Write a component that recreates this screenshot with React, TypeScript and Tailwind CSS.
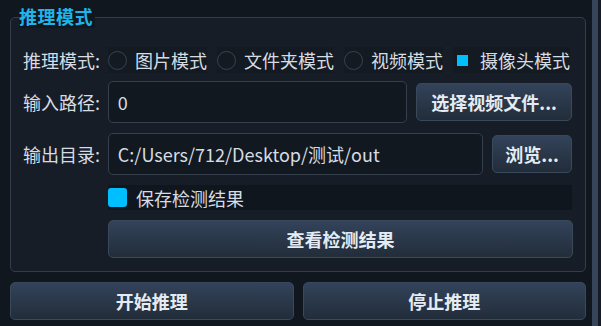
import React from 'react';

const FONT = { fontFamily: '"Microsoft YaHei", "Noto Sans CJK SC", "Noto Sans", sans-serif' };

const modes = [
  { label: '图片模式', checked: false },
  { label: '文件夹模式', checked: false },
  { label: '视频模式', checked: false },
  { label: '摄像头模式', checked: true },
];

function Btn({ children, className = '' }: { children: React.ReactNode; className?: string }) {
  return (
    <button
      className={`flex items-center justify-center rounded-[5px] border border-[#3a485b] bg-gradient-to-b from-[#33435a] to-[#222d3a] text-[18px] font-bold text-[#e4ebf3] ${className}`}
    >
      {children}
    </button>
  );
}

export default function App() {
  return (
    <div style={FONT} className="flex h-[326px] w-[601px] overflow-hidden bg-[#11171e] text-[18px] text-[#d6dce3]">
      <div className="flex w-[592px] flex-col pl-[10px] pr-[6px]">
        {/* group box */}
        <div className="relative mt-[17px] h-[255px] rounded-[5px] border border-[#343e4b] bg-[#161d26] pl-[12px] pr-[13px]">
          <span className="absolute left-[8px] top-[-14px] bg-[#11171e] pr-[2px] text-[18px] font-bold leading-[24px] tracking-[0.5px] text-[#1fb5ea]">
            推理模式
          </span>

          {/* mode row */}
          <div className="mt-[29px] flex h-[26px] items-center">
            <span className="w-[85px] leading-none">推理模式:</span>
            <div className="flex gap-[10px]">
              {modes.map(m => (
                <div key={m.label} className="flex h-[26px] items-center gap-[8px] bg-[#131a22]">
                  <span className="flex h-[19px] w-[19px] items-center justify-center">
                    {m.checked ? (
                      <span className="h-[11px] w-[11px] bg-[#00bfff]" />
                    ) : (
                      <span className="h-[19px] w-[19px] rounded-full border border-[#384250]" />
                    )}
                  </span>
                  <span className="leading-none">{m.label}</span>
                </div>
              ))}
            </div>
          </div>

          {/* input path */}
          <div className="mt-[8px] flex h-[42px] items-center">
            <span className="w-[85px]">输入路径:</span>
            <div className="flex h-[42px] w-[300px] items-center rounded-[5px] border border-[#363f4c] bg-[#121820] px-[9px]">0</div>
            <Btn className="ml-[9px] h-[38px] w-[156px]">选择视频文件...</Btn>
          </div>

          {/* output dir */}
          <div className="mt-[10px] flex h-[42px] items-center">
            <span className="w-[85px]">输出目录:</span>
            <div className="flex h-[42px] w-[376px] items-center rounded-[5px] border border-[#363f4c] bg-[#121820] px-[9px]">
              C:/Users/712/Desktop/测试/out
            </div>
            <Btn className="ml-[9px] h-[38px] w-[80px]">浏览...</Btn>
          </div>

          {/* save checkbox */}
          <div className="ml-[85px] mt-[10px] flex h-[25px] items-center gap-[9px] bg-[#10161d]">
            <span className="h-[19px] w-[19px] rounded-[3px] bg-[#00bfff]" />
            <span className="leading-none">保存检测结果</span>
          </div>

          <Btn className="ml-[85px] mt-[10px] h-[38px] w-[465px]">查看检测结果</Btn>
        </div>

        <div className="mt-[10px] flex gap-[9px]">
          <Btn className="h-[38px] flex-1">开始推理</Btn>
          <Btn className="h-[38px] flex-1">停止推理</Btn>
        </div>
      </div>
      <div className="w-[6px] bg-[#364559]" />
      <div className="flex-1 bg-[#141b23]" />
    </div>
  );
}
